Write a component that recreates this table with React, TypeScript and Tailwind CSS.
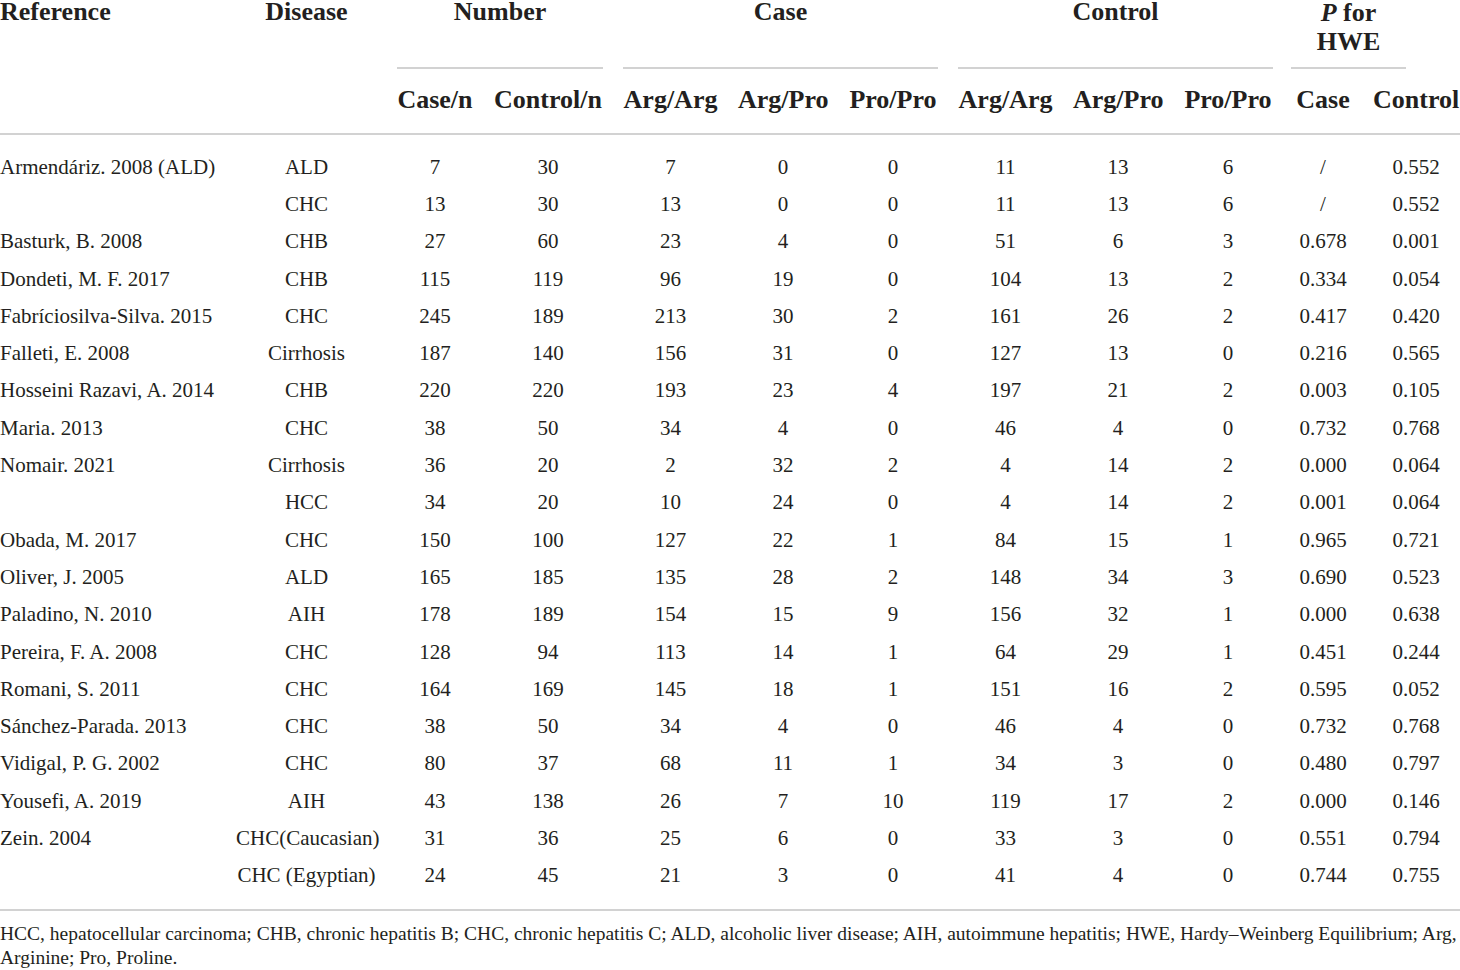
import React from 'react';

type Row = string[];

const rows: Row[] = [
  ['Armendáriz. 2008 (ALD)', 'ALD', '7', '30', '7', '0', '0', '11', '13', '6', '/', '0.552'],
  ['', 'CHC', '13', '30', '13', '0', '0', '11', '13', '6', '/', '0.552'],
  ['Basturk, B. 2008', 'CHB', '27', '60', '23', '4', '0', '51', '6', '3', '0.678', '0.001'],
  ['Dondeti, M. F. 2017', 'CHB', '115', '119', '96', '19', '0', '104', '13', '2', '0.334', '0.054'],
  ['Fabríciosilva-Silva. 2015', 'CHC', '245', '189', '213', '30', '2', '161', '26', '2', '0.417', '0.420'],
  ['Falleti, E. 2008', 'Cirrhosis', '187', '140', '156', '31', '0', '127', '13', '0', '0.216', '0.565'],
  ['Hosseini Razavi, A. 2014', 'CHB', '220', '220', '193', '23', '4', '197', '21', '2', '0.003', '0.105'],
  ['Maria. 2013', 'CHC', '38', '50', '34', '4', '0', '46', '4', '0', '0.732', '0.768'],
  ['Nomair. 2021', 'Cirrhosis', '36', '20', '2', '32', '2', '4', '14', '2', '0.000', '0.064'],
  ['', 'HCC', '34', '20', '10', '24', '0', '4', '14', '2', '0.001', '0.064'],
  ['Obada, M. 2017', 'CHC', '150', '100', '127', '22', '1', '84', '15', '1', '0.965', '0.721'],
  ['Oliver, J. 2005', 'ALD', '165', '185', '135', '28', '2', '148', '34', '3', '0.690', '0.523'],
  ['Paladino, N. 2010', 'AIH', '178', '189', '154', '15', '9', '156', '32', '1', '0.000', '0.638'],
  ['Pereira, F. A. 2008', 'CHC', '128', '94', '113', '14', '1', '64', '29', '1', '0.451', '0.244'],
  ['Romani, S. 2011', 'CHC', '164', '169', '145', '18', '1', '151', '16', '2', '0.595', '0.052'],
  ['Sánchez-Parada. 2013', 'CHC', '38', '50', '34', '4', '0', '46', '4', '0', '0.732', '0.768'],
  ['Vidigal, P. G. 2002', 'CHC', '80', '37', '68', '11', '1', '34', '3', '0', '0.480', '0.797'],
  ['Yousefi, A. 2019', 'AIH', '43', '138', '26', '7', '10', '119', '17', '2', '0.000', '0.146'],
  ['Zein. 2004', 'CHC(Caucasian)', '31', '36', '25', '6', '0', '33', '3', '0', '0.551', '0.794'],
  ['', 'CHC (Egyptian)', '24', '45', '21', '3', '0', '41', '4', '0', '0.744', '0.755'],
];

const widths = [226, 161, 96, 130, 115, 110, 110, 115, 110, 110, 80, 106];

const subHeads = ['Case/n', 'Control/n', 'Arg/Arg', 'Arg/Pro', 'Pro/Pro', 'Arg/Arg', 'Arg/Pro', 'Pro/Pro', 'Case', 'Control'];

const GroupHead = ({ label, span }: { label: string; span: number }) => (
  <th colSpan={span} className="p-0 align-top font-bold">
    <div className="flex h-[69px] flex-col">
      <div className="leading-[24px]">{label}</div>
      <div className="mx-[10px] mt-auto h-[2px] bg-[#d2d2d2]" />
    </div>
  </th>
);

export default function App() {
  return (
    <div className="w-full overflow-hidden bg-white font-['Liberation_Serif','Times_New_Roman',serif] text-[#231f20]">
      <table className="w-[1469px] table-fixed border-collapse">
        <colgroup>
          {widths.map((w, i) => (
            <col key={i} style={{ width: w }} />
          ))}
        </colgroup>
        <thead className="text-[26px]">
          <tr className="h-[69px]">
            <th className="p-0 text-left align-top font-bold">
              <div className="leading-[23px]">Reference</div>
            </th>
            <th className="p-0 align-top font-bold">
              <div className="leading-[23px]">Disease</div>
            </th>
            <GroupHead label="Number" span={2} />
            <GroupHead label="Case" span={3} />
            <GroupHead label="Control" span={3} />
            <th colSpan={2} className="p-0 align-top font-bold">
              <div className="flex h-[69px] flex-col">
                <div className="ml-[8px] w-[115px] text-center">
                  <div className="leading-[25px]">
                    <i>P</i> for
                  </div>
                  <div className="leading-[33px]">HWE</div>
                </div>
                <div className="ml-[8px] mt-auto h-[2px] w-[115px] bg-[#d2d2d2]" />
              </div>
            </th>
          </tr>
          <tr className="h-[65px] border-b-2 border-[#d2d2d2]">
            <th />
            <th />
            {subHeads.map((h, i) => (
              <th key={i} className="px-[10px] pb-[4px] text-center align-middle font-bold leading-[29px] whitespace-nowrap">
                {h}
              </th>
            ))}
          </tr>
        </thead>
        <tbody className="text-[21px] leading-[24px]">
          <tr className="h-[14px]">
            <td colSpan={12} />
          </tr>
          {rows.map((r, ri) => (
            <tr key={ri} className="h-[37.3px]">
              {r.map((c, ci) => (
                <td
                  key={ci}
                  className={
                    ci === 0
                      ? 'pr-[10px] text-left align-middle whitespace-nowrap'
                      : 'px-[10px] text-center align-middle whitespace-nowrap'
                  }
                >
                  {c}
                </td>
              ))}
            </tr>
          ))}
          <tr className="h-[16px] border-b-2 border-[#d2d2d2]">
            <td colSpan={12} />
          </tr>
        </tbody>
      </table>
      <p className="w-[1460px] pt-[11px] text-[19.5px] leading-[24px]">
        HCC, hepatocellular carcinoma; CHB, chronic hepatitis B; CHC, chronic hepatitis C; ALD, alcoholic liver disease; AIH, autoimmune hepatitis; HWE, Hardy–Weinberg Equilibrium; Arg, Arginine; Pro, Proline.
      </p>
    </div>
  );
}
